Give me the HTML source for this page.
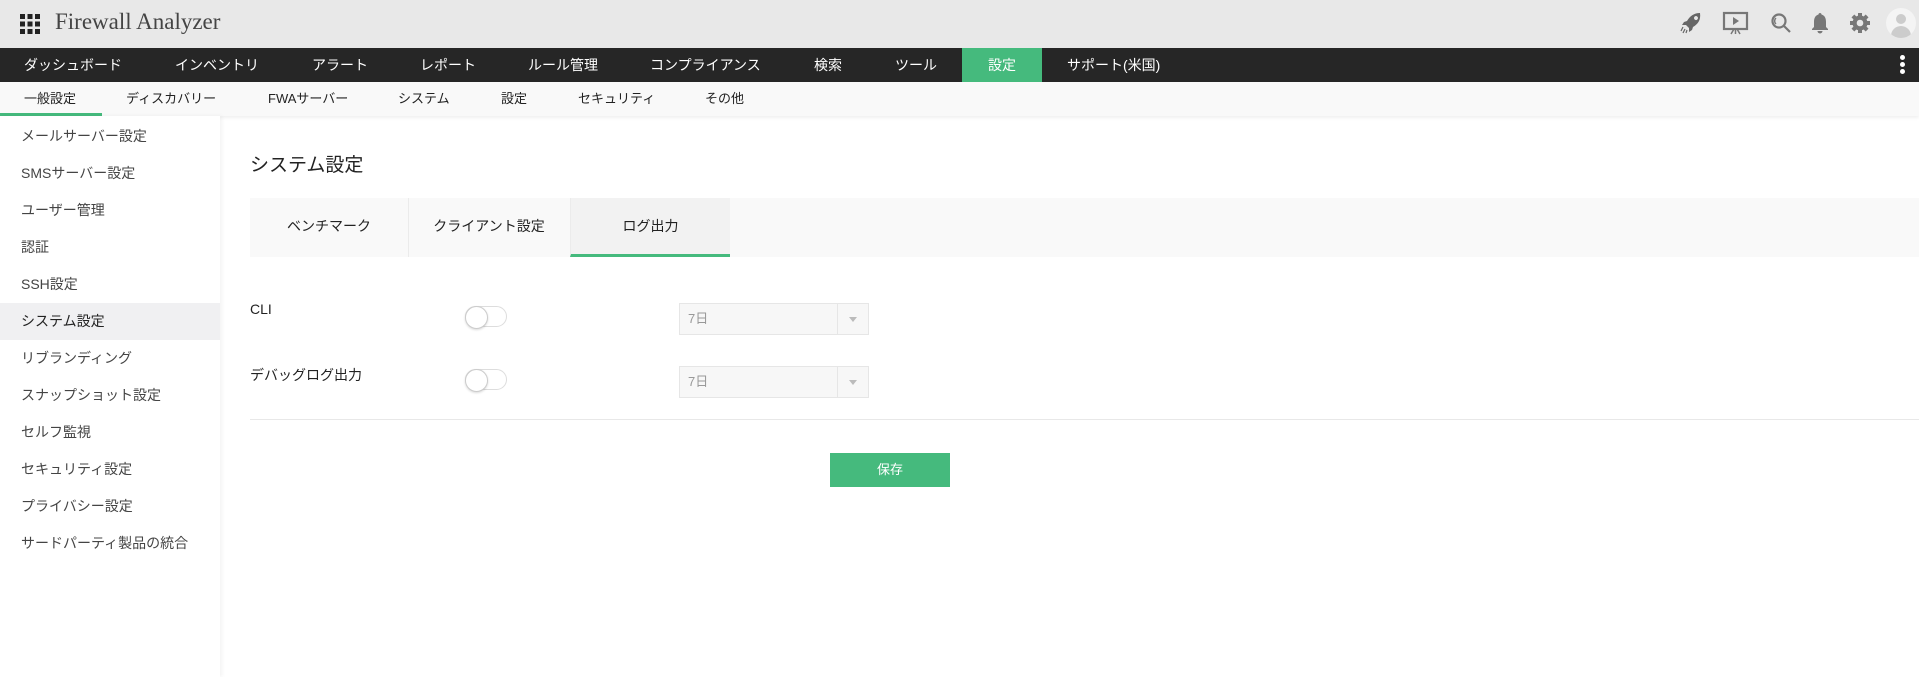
<!DOCTYPE html>
<html><head><meta charset="utf-8"><style>
*{margin:0;padding:0;box-sizing:border-box}
body{width:1919px;height:677px;overflow:hidden;background:#fff;font-family:"Liberation Sans","Noto Sans CJK JP",sans-serif;position:relative;color:#333}
.abs{position:absolute}
#hdr{left:0;top:0;width:1919px;height:48px;background:#e8e8e8}
#nav{left:0;top:48px;width:1919px;height:34px;background:#262626}
#nav span{position:absolute;top:0;line-height:34px;color:#fff;font-size:14px}
#sub{left:0;top:82px;width:1919px;height:34px;background:#f9f9f9;box-shadow:0 2px 3px rgba(0,0,0,.06)}
#sub span{position:absolute;top:0;line-height:34px;color:#222;font-size:13px}
#side{left:0;top:116px;width:220px;height:561px;background:#fff;box-shadow:2px 0 4px rgba(0,0,0,.05)}
.si{position:absolute;left:0;width:220px;height:37px;line-height:37px;padding-left:21px;font-size:14px;color:#444}
.tab{position:absolute;top:198px;height:59px;line-height:56px;text-align:center;font-size:14px;color:#222}
.sel{position:absolute;left:679px;width:190px;height:32px;border:1px solid #e6e6e6;background:#f7f7f7;font-size:13px;color:#999;line-height:30px;padding-left:8px}
.sel:after{content:"";position:absolute;right:0;top:0;width:30px;height:30px;border-left:1px solid #e6e6e6}
.sel i{position:absolute;right:11px;top:13px;border-left:4px solid transparent;border-right:4px solid transparent;border-top:5px solid #bbb}
.tg{position:absolute;left:465px;width:42px;height:21px;border:1px solid #ddd;border-radius:11px;background:#fff}
.tg:before{content:"";position:absolute;left:-1px;top:-1px;width:21px;height:21px;border-radius:50%;border:1px solid #ccc;background:#fff;box-shadow:0 1px 2px rgba(0,0,0,.15)}
</style></head><body>
<div id="hdr" class="abs">
 <svg class="abs" style="left:20px;top:14px" width="20" height="20" viewBox="0 0 20 20" fill="#222">
  <rect x="0" y="0" width="5" height="5"/><rect x="7.5" y="0" width="5" height="5"/><rect x="15" y="0" width="5" height="5"/>
  <rect x="0" y="7.5" width="5" height="5"/><rect x="7.5" y="7.5" width="5" height="5"/><rect x="15" y="7.5" width="5" height="5"/>
  <rect x="0" y="15" width="5" height="5"/><rect x="7.5" y="15" width="5" height="5"/><rect x="15" y="15" width="5" height="5"/></svg>
 <div class="abs" style="left:55px;top:9px;font-family:'Liberation Serif','DejaVu Serif',serif;font-size:23px;color:#444">Firewall Analyzer</div>
 <svg class="abs" style="left:1680px;top:12px" width="22" height="22" viewBox="0 0 22 22" fill="#666"><path d="M20 1c-6 0-10 3-13 8l-3 1-2 3 4 0 3 3 0 4 3-2 1-3c5-3 8-7 7-14zM14 6a2 2 0 1 1 0 .1z"/><path d="M3 15l-2 4M5 17l-2 4M7 18l-1 3" stroke="#666" stroke-width="1.2"/></svg>
 <svg class="abs" style="left:1722px;top:11px" width="27" height="25" viewBox="0 0 27 25" fill="none" stroke="#777" stroke-width="2.2"><rect x="2" y="2" width="23" height="16"/><path d="M11 6l6 4-6 4z" fill="#777" stroke="none"/><path d="M13.5 18v5M9 23l3-5M18 23l-3-5" stroke-width="1.5"/></svg>
 <svg class="abs" style="left:1770px;top:12px" width="22" height="22" viewBox="0 0 22 22" fill="none" stroke="#777" stroke-width="2.2"><circle cx="9" cy="9" r="6.5"/><path d="M14 14l6 6"/><path d="M6 6a4 4 0 0 0 0 6" stroke-width="1.4"/></svg>
 <svg class="abs" style="left:1811px;top:12px" width="18" height="22" viewBox="0 0 18 22" fill="#777"><path d="M9 1c1 0 1.5.7 1.5 1.5C14 3.5 15 6.5 15 10v5l2 2v1H1v-1l2-2v-5c0-3.5 1-6.5 4.5-7.5C7.5 1.7 8 1 9 1zM6.5 19h5a2.5 2.5 0 0 1-5 0z"/></svg>
 <svg class="abs" style="left:1849px;top:12px" width="22" height="22" viewBox="0 0 22 22"><g fill="#777"><circle cx="11" cy="11" r="7.5"/><g stroke="#777" stroke-width="4"><path d="M11 1v20M1 11h20M3.9 3.9l14.2 14.2M18.1 3.9L3.9 18.1"/></g></g><circle cx="11" cy="11" r="3.3" fill="#e8e8e8"/></svg>
 <div class="abs" style="left:1886px;top:8px;width:30px;height:30px;border-radius:50%;background:#f4f4f4;overflow:hidden"><div class="abs" style="left:10px;top:6px;width:10px;height:10px;border-radius:50%;background:#ccc"></div><div class="abs" style="left:5px;top:18px;width:20px;height:14px;border-radius:10px 10px 0 0;background:#ccc"></div></div>
</div>
<div id="nav" class="abs">
 <span style="left:24px">ダッシュボード</span><span style="left:175px">インベントリ</span><span style="left:312px">アラート</span><span style="left:420px">レポート</span><span style="left:528px">ルール管理</span><span style="left:650px">コンプライアンス</span><span style="left:814px">検索</span><span style="left:895px">ツール</span>
 <div class="abs" style="left:962px;top:0;width:80px;height:34px;background:#45ba7d"></div><span style="left:988px">設定</span>
 <span style="left:1067px">サポート(米国)</span>
 <div class="abs" style="left:1900px;top:7px;width:5px;height:20px"><div style="width:5px;height:5px;border-radius:50%;background:#fff;margin-bottom:2px"></div><div style="width:5px;height:5px;border-radius:50%;background:#fff;margin-bottom:2px"></div><div style="width:5px;height:5px;border-radius:50%;background:#fff"></div></div>
</div>
<div id="sub" class="abs">
 <span style="left:24px">一般設定</span><span style="left:126px">ディスカバリー</span><span style="left:268px">FWAサーバー</span><span style="left:398px">システム</span><span style="left:501px">設定</span><span style="left:578px">セキュリティ</span><span style="left:705px">その他</span>
 <div class="abs" style="left:0;top:31px;width:102px;height:3px;background:#45ba7d"></div>
</div>
<div id="side" class="abs">
 <div class="si" style="top:2px">メールサーバー設定</div>
 <div class="si" style="top:39px">SMSサーバー設定</div>
 <div class="si" style="top:76px">ユーザー管理</div>
 <div class="si" style="top:113px">認証</div>
 <div class="si" style="top:150px">SSH設定</div>
 <div class="si" style="top:187px;background:#f0f0f2;color:#222">システム設定</div>
 <div class="si" style="top:224px">リブランディング</div>
 <div class="si" style="top:261px">スナップショット設定</div>
 <div class="si" style="top:298px">セルフ監視</div>
 <div class="si" style="top:335px">セキュリティ設定</div>
 <div class="si" style="top:372px">プライバシー設定</div>
 <div class="si" style="top:409px">サードパーティ製品の統合</div>
</div>
<div class="abs" style="left:250px;top:150px;font-size:19px;color:#222">システム設定</div>
<div class="abs" style="left:250px;top:198px;width:1669px;height:59px;background:#f9f9f9"></div>
<div class="tab" style="left:250px;width:159px;border-right:1px solid #ebebeb">ベンチマーク</div>
<div class="tab" style="left:409px;width:160px">クライアント設定</div>
<div class="tab" style="left:570px;width:160px;background:#f2f2f2;border-left:1px solid #ebebeb;border-bottom:3px solid #45ba7d">ログ出力</div>
<div class="abs" style="left:250px;top:301px;font-size:14px;color:#222">CLI</div>
<div class="tg" style="top:306px"></div>
<div class="sel" style="top:303px">7日<i></i></div>
<div class="abs" style="left:250px;top:365px;font-size:14px;color:#222">デバッグログ出力</div>
<div class="tg" style="top:369px"></div>
<div class="sel" style="top:366px">7日<i></i></div>
<div class="abs" style="left:250px;top:419px;width:1669px;height:1px;background:#e8e8e8"></div>
<div class="abs" style="left:830px;top:453px;width:120px;height:34px;background:#45ba7d;color:#fff;font-size:13px;text-align:center;line-height:34px">保存</div>
</body></html>
